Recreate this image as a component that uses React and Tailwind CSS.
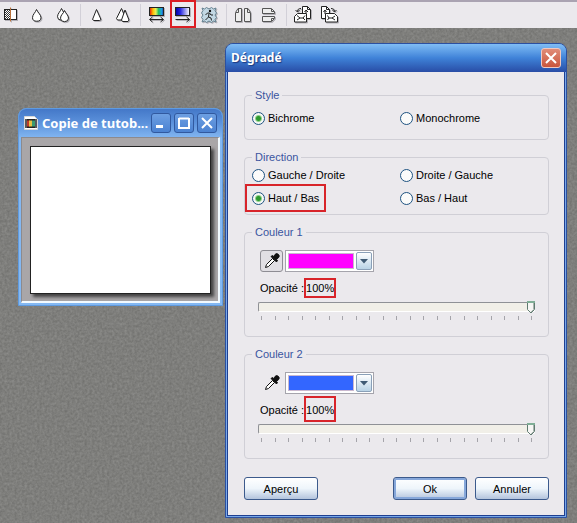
import { useState } from 'react';

const TICKS = Array.from({ length: 21 }, (_, i) => i);

/* ---------- toolbar icons (18x18, pixel aligned) ---------- */

const Icon = ({ children }) => (
    <svg
        width="18"
        height="18"
        viewBox="0 0 18 18"
        fill="#fff"
        stroke="#222"
        className="drop-shadow-[1px_1px_0_#b4b2b8]"
        aria-hidden="true"
    >
        {children}
    </svg>
);

const ContrastIcon = () => (
    <Icon>
        <defs>
            <pattern id="dither" width="2" height="2" patternUnits="userSpaceOnUse">
                <rect width="2" height="2" fill="#fff" stroke="none" />
                <path d="M0 0h1v1H0zM1 1h1v1H1z" fill="#333" stroke="none" />
            </pattern>
        </defs>
        <rect x="1.5" y="3.5" width="12" height="10" fill="#fff" />
        <rect x="2" y="4" width="5" height="9" fill="url(#dither)" stroke="none" />
        <path d="M7.5 1.5v14" stroke="#b8703a" />
    </Icon>
);

const DropIcon = () => (
    <Icon>
        <path d="M8.5 3.5c-1 3-4 5-4 8.200a4.200 3.500 0 0 0 8.500 0c0-3.200-3.500-5.200-4.500-8.200z" />
    </Icon>
);

const DropsIcon = () => (
    <Icon>
        <path d="M7.500 2.500c-1 3-4 5-4 8.200a4 3.500 0 0 0 8 0c0-3.200-3-5.200-4-8.200z" />
        <path d="M10.500 4.500c-1 3-4 4.500-4 7.700a4 3.500 0 0 0 8 0c0-3.200-3-4.700-4-7.700z" />
    </Icon>
);

const ConeIcon = () => (
    <Icon>
        <path d="M8.500 3.500l-4 10 1.500 1h5.500l1.500-1z" />
    </Icon>
);

const ConesIcon = () => (
    <Icon>
        <path d="M7.500 2.500l-5 10 1 1.500h6l2-2z" />
        <path d="M11 4l-3.500 10 1 1.500h5.500l1-1.500z" />
    </Icon>
);

const SpectrumIcon = () => (
    <Icon>
        <defs>
            <linearGradient id="spectrum">
                <stop offset="0" stopColor="#e01010" />
                <stop offset="0.250" stopColor="#ffc000" />
                <stop offset="0.450" stopColor="#e8f060" />
                <stop offset="0.650" stopColor="#20c060" />
                <stop offset="0.850" stopColor="#20a0e0" />
                <stop offset="1" stopColor="#2040b0" />
            </linearGradient>
        </defs>
        <rect x="1.500" y="1.500" width="14" height="8" fill="url(#spectrum)" />
        <path d="M2 13.500h13M4.500 11l-3 2.500 3 2.500M12.500 11l3 2.500-3 2.500" fill="none" />
    </Icon>
);

const GradientIcon = () => (
    <Icon>
        <defs>
            <linearGradient id="blues">
                <stop offset="0" stopColor="#0000a0" />
                <stop offset="0.350" stopColor="#2828e0" />
                <stop offset="1" stopColor="#fff" />
            </linearGradient>
        </defs>
        <rect x="1.500" y="1.500" width="14" height="8" fill="url(#blues)" />
        <path d="M1.500 13.500h14M12.500 11l3 2.500-3 2.500" fill="none" />
    </Icon>
);

const StampIcon = () => (
    <Icon>
        <path
            d="M2 2l2.500 1L6.500 1.500 9 3l2.500-1.500L13.500 3 16 2l-1 2.500L16.500 7 15 9l1.500 2.500-1.500 2 1 2.500-2.500-1-2 1.500L9 15l-2.500 1.500-2-1.500L2 16l1-2.500-1.500-2L3 9 1.500 7 3 4.500z"
            fill="#c3d8e4"
            stroke="#64808f"
        />
        <circle cx="10" cy="5" r="1.200" fill="#111" stroke="none" />
        <path d="M5.500 9l2-2h2l1.500 2h2M9 7.500L8.500 11l2.500 1 .5 2.500M8.500 11L5.500 14" fill="none" />
    </Icon>
);

const MirrorIcon = () => (
    <Icon>
        <path d="M1.500 15.500v-9l2.500-4h3.500v13zM10.500 15.500v-13H14l2.500 4v9z" fill="#eee" stroke="#555" />
        <path d="M4.500 3v3.500H2M13.500 3v3.500H16" fill="none" stroke="#555" />
    </Icon>
);

const FlipIcon = () => (
    <Icon>
        <path d="M2.500 7.500v-5h9l3 3v2zM2.500 10.500h12v2l-3 3h-9z" fill="#eee" stroke="#555" />
        <path d="M11.500 3v2.500H14M11.500 15v-2.500H14" fill="none" stroke="#555" />
    </Icon>
);

const RotateLeftIcon = () => (
    <Icon>
        <path d="M8.500 .5h5l3 3v9h-8z" />
        <path d="M13.500 .5v3h3M10.500 6l1.500-2 2 2M12 5v2" fill="none" />
        <path d="M.5 10.500l3-3h9v8.500H.5z" />
        <path d="M3 9.500l3 2.500-3 2M6 12h3M11 9.500L9 12l2 2" fill="none" />
        <path d="M3.500 5.500c0-2 1-3 3.500-3M1.500 4l2 2 2-2" fill="none" />
    </Icon>
);

const RotateRightIcon = () => (
    <Icon>
        <path d="M1.500 .5h5l3 3v9h-8z" />
        <path d="M6.500 .5v3h3M3.500 6L5 4l1.500 2M5 5v3" fill="none" />
        <path d="M5.500 7.500h9l3 3V16h-12z" />
        <path d="M15 10l-3 2 3 2M12 12H9M7.500 9.500L9 12l-1.500 2" fill="none" />
        <path d="M11 2.500c2.500 0 3.500 1 3.500 3M12.500 4l2 2 2-2" fill="none" />
    </Icon>
);

const TOOL_GROUPS = [
    [
        { name: 'Contraste', Glyph: ContrastIcon },
        { name: 'Adoucir', Glyph: DropIcon },
        { name: 'Adoucir plus', Glyph: DropsIcon }
    ],
    [
        { name: 'Renforcer', Glyph: ConeIcon },
        { name: 'Renforcer plus', Glyph: ConesIcon }
    ],
    [
        { name: 'Variation de teinte', Glyph: SpectrumIcon },
        { name: 'Dégradé', Glyph: GradientIcon, marked: true },
        { name: 'Filtre personnalisé', Glyph: StampIcon }
    ],
    [
        { name: 'Symétrie horizontale', Glyph: MirrorIcon },
        { name: 'Symétrie verticale', Glyph: FlipIcon }
    ],
    [
        { name: 'Rotation gauche', Glyph: RotateLeftIcon },
        { name: 'Rotation droite', Glyph: RotateRightIcon }
    ]
];

const Toolbar = () => (
    <div className="flex h-7 shrink-0 border-t-2 border-[#aaa3b2] bg-[#ebe9ed]">
        {TOOL_GROUPS.map((group, i) => (
            <div key={i} className="flex">
                {i > 0 && (
                    <span className="flex w-2 justify-center py-0.5">
                        <span className="w-px bg-[#d2d0d8]" />
                    </span>
                )}
                {group.map(({ name, Glyph, marked }, j) => (
                    <button
                        key={name}
                        type="button"
                        aria-label={name}
                        className={`relative flex items-center justify-center ${i === 0 && j === 0 ? 'w-6' : 'w-[26px]'}`}
                    >
                        <Glyph />
                        {marked && <span className="absolute inset-x-0 -top-0.5 bottom-0 border-2 border-[#dc1e24]" />}
                    </button>
                ))}
            </div>
        ))}
    </div>
);

/* ---------- desktop ---------- */

// Grain of the workspace background
const Grain = () => (
    <svg className="absolute inset-0 h-full w-full" aria-hidden="true">
        <filter id="grain" colorInterpolationFilters="sRGB">
            <feTurbulence type="fractalNoise" baseFrequency="0.4" numOctaves="2" seed="4" />
            <feColorMatrix values="0.14 0 0 0 0.425  0.14 0 0 0 0.425  0.14 0 0 0 0.415  0 0 0 0 1" />
        </filter>
        <rect width="100%" height="100%" filter="url(#grain)" />
    </svg>
);

const WindowButton = ({ label, children }) => (
    <button
        type="button"
        aria-label={label}
        className="flex h-5 w-5 items-center justify-center rounded-[3px] border border-[#31599f] bg-linear-to-b from-[#6d9fe2] to-[#4b82d2]"
    >
        <svg width="14" height="14" viewBox="0 0 14 14" fill="none" stroke="#fff" strokeWidth="2" aria-hidden="true">
            {children}
        </svg>
    </button>
);

const DocumentWindow = () => (
    <section className="absolute top-20 left-[18px] flex h-[198px] w-[205px] flex-col rounded-t-lg border border-[#5f9be0] bg-[#84b8f2] px-0.5 pb-0.5">
        <header className="-mx-0.5 flex h-7 shrink-0 items-center rounded-t-[7px] bg-linear-to-b from-[#4478c8] via-[#5c92dc] to-[#80b4f0] px-[5px]">
            <svg width="14" height="14" viewBox="0 0 14 14" aria-hidden="true">
                <path d="M.5.500h10l3 3v10H.5z" fill="#fff" stroke="#d8d8d8" />
                <path d="M1 3h12v9H1z" fill="#222" />
                <path d="M3 4.500h3v6H3z" fill="#c03a2a" />
                <path d="M5 4.500h3v6H5z" fill="#e8c040" />
                <path d="M8 4.500h3v6H8z" fill="#3a9a70" />
                <path d="M2 3.500v9M12 3.500v9" stroke="#fff" strokeDasharray="1 1" />
            </svg>
            <h2 className="ml-1 flex-1 font-['Noto_Sans',sans-serif] text-[13px] leading-5 font-bold whitespace-nowrap text-white">
                Copie de tutob...
            </h2>
            <div className="flex gap-[3px]">
                <WindowButton label="Réduire"><path d="M2 10.500h7" strokeWidth="3" /></WindowButton>
                <WindowButton label="Agrandir"><path d="M2 2.500h10M2 2v10h10V2" /></WindowButton>
                <WindowButton label="Fermer"><path d="M2 2l10 10M12 2L2 12" /></WindowButton>
            </div>
        </header>
        <div className="flex flex-1 border-t border-l border-r-2 border-b-2 border-t-[#8c8a8e] border-r-[#f2faff] border-b-[#f2faff] border-l-[#8c8a8e] bg-[#a9a6a8] pt-2 pr-[7px] pb-[7px] pl-2">
            <div className="flex-1 border border-[#222] bg-white shadow-[3px_3px_3px_#444]" />
        </div>
    </section>
);

/* ---------- dialog ---------- */

const Group = ({ title, className, children }) => (
    <fieldset className="rounded-[4px] border border-[#d0cfd6]">
        <legend className="ml-[7px] px-[3px] leading-[14px] text-[#3a559f]">{title}</legend>
        <div className={className}>{children}</div>
    </fieldset>
);

const Radio = ({ name, label, checked, onChange, marked }) => (
    <label className="relative flex h-4 items-center gap-[3px] justify-self-start">
        <input
            type="radio"
            name={name}
            checked={checked}
            onChange={onChange}
            className="h-[13px] w-[13px] appearance-none rounded-full border border-[#1d5281] bg-[#fbfbfa] checked:bg-[radial-gradient(circle,#2e9a30_0_2px,#8fd08c_3px,#f6f8f6_4px)]"
        />
        {label}
        {marked && <span className="absolute -inset-x-[7px] -inset-y-[6px] border-2 border-[#d8242a]" />}
    </label>
);

const RadioGrid = ({ name, options, value, onChange, marked }) => (
    <div className="grid grid-cols-2 gap-y-[7px]">
        {options.map(option => (
            <Radio
                key={option}
                name={name}
                label={option}
                checked={value === option}
                onChange={() => onChange(option)}
                marked={marked === option}
            />
        ))}
    </div>
);

const Eyedropper = () => (
    <svg width="16" height="16" viewBox="0 0 16 16" aria-hidden="true">
        <path d="M1.500 14.500l1-3 6-6 2 2-6 6z" fill="#fff" stroke="#111" />
        <path d="M7 3.500l1.500-1 1 1 1.500-2a2.300 2.300 0 0 1 3.500 3.200L12.500 6.500l1 1L12.500 9z" fill="#111" stroke="#111" />
    </svg>
);

const OpacitySlider = ({ id, value, onChange }) => (
    <div className="relative -ml-0.5 w-[277px]">
        <input
            id={id}
            type="range"
            min="0"
            max="100"
            value={value}
            onChange={e => onChange(Number(e.target.value))}
            className="block h-[10px] w-full appearance-none rounded-[2px] border border-t-[#8f9196] border-r-[#fff] border-b-[#fff] border-l-[#8f9196] bg-[#f1efe8] [&::-webkit-slider-thumb]:h-2 [&::-webkit-slider-thumb]:w-2 [&::-webkit-slider-thumb]:appearance-none"
        />
        <span className="pointer-events-none absolute -top-px right-1 left-0">
            <svg
                className="absolute -translate-x-1/2"
                style={{ left: `${value}%` }}
                width="8"
                height="13"
                viewBox="0 0 8 13"
                aria-hidden="true"
            >
                <path d="M.5 1.500h7v7L4 12 .5 8.500z" fill="#f6f6f4" stroke="#5f7a70" />
                <path d="M6.500 2v6.500L4 11" fill="none" stroke="#a9b4ae" />
                <path d="M0 1h8" stroke="#7fae96" strokeWidth="2" />
            </svg>
        </span>
        <div className="mt-1 mr-[3px] ml-[3px] flex justify-between">
            {TICKS.map(tick => (
                <span key={tick} className="h-1 w-px bg-[#a5a4aa]" />
            ))}
        </div>
    </div>
);

const ColorGroup = ({ id, title, picking, swatch, colorName }) => {
    const [opacity, setOpacity] = useState(100);

    return (
        <Group title={title} className="pt-[11px] pb-4 pl-[15px]">
            <div className="flex gap-0.5">
                <button
                    type="button"
                    aria-label="Pipette"
                    className={`flex h-[22px] w-[23px] items-center justify-center rounded-[3px] border ${
                        picking ? 'border-[#8e8d94] bg-[#e1dfe4]' : 'border-transparent'
                    }`}
                >
                    <Eyedropper />
                </button>
                <div className="flex h-[22px] w-[89px] gap-0.5 border border-[#a5a4ac] bg-white py-px pr-px pl-0.5">
                    <select
                        aria-label={title}
                        className={`my-px min-w-0 flex-1 appearance-none border border-[#c9b8cf] text-transparent ${swatch}`}
                    >
                        <option className="text-black">{colorName}</option>
                    </select>
                    <span className="pointer-events-none flex w-4 items-center justify-center rounded-[2px] border border-[#8aa0b8] bg-linear-to-b from-white to-[#b9d3e6]">
                        <svg width="8" height="5" viewBox="0 0 8 5" fill="#3f5a74" aria-hidden="true">
                            <path d="M0 0h8L4 4.500z" />
                        </svg>
                    </span>
                </div>
            </div>
            <div className="mt-2 mb-[6px] flex h-4 items-center gap-0.5">
                <label htmlFor={id}>Opacité :</label>
                <output htmlFor={id} className="relative">
                    {opacity}%
                    <span className={`absolute -inset-x-0.5 border-2 border-[#d8242a] ${picking ? '-inset-y-0.5' : '-top-[6px] -bottom-1'}`} />
                </output>
            </div>
            <OpacitySlider id={id} value={opacity} onChange={setOpacity} />
        </Group>
    );
};

const DialogButton = ({ isDefault, children }) => (
    <button
        type="button"
        className={`h-[23px] w-[74px] rounded-[3px] border border-[#3c5a8c] bg-linear-to-b from-white via-[#eef5fb] to-[#b4c4dd] ${
            isDefault ? 'shadow-[inset_0_0_0_2px_#86a7da]' : ''
        }`}
    >
        {children}
    </button>
);

const GradientDialog = () => {
    const [style, setStyle] = useState('Bichrome');
    const [direction, setDirection] = useState('Haut / Bas');

    return (
        <section
            role="dialog"
            aria-label="Dégradé"
            className="absolute top-[15px] left-[225px] w-[342px] rounded-t-lg border border-[#2c50a0] bg-[#78a8e8] px-px pb-px"
        >
            <header className="-mx-px flex h-7 items-center justify-between rounded-t-[7px] bg-linear-to-b from-[#80bdf5] via-[#3f82d8] to-[#294da6] px-[5px]">
                <h1 className="font-['Noto_Sans',sans-serif] text-[12px] leading-5 font-bold text-white [text-shadow:1px_1px_1px_#1c3a80]">
                    Dégradé
                </h1>
                <button
                    type="button"
                    aria-label="Fermer"
                    className="flex h-5 w-5 items-center justify-center rounded-[3px] border border-[#f0c8c0] bg-linear-to-b from-[#e08c78] to-[#c9553c]"
                >
                    <svg width="12" height="12" viewBox="0 0 12 12" stroke="#fff" strokeWidth="2" aria-hidden="true">
                        <path d="M1 1l10 10M11 1L1 11" />
                    </svg>
                </button>
            </header>
            <form
                onSubmit={e => e.preventDefault()}
                className="flex flex-col gap-[10px] border border-t-0 border-[#1f3f90] bg-[#ebe9ed] pt-4 pr-[15px] pb-[15px] pl-4"
            >
                <Group title="Style" className="pt-2 pb-[13px] pl-[7px]">
                    <RadioGrid name="style" options={['Bichrome', 'Monochrome']} value={style} onChange={setStyle} />
                </Group>
                <Group title="Direction" className="pt-[3px] pb-2 pl-[7px]">
                    <RadioGrid
                        name="direction"
                        options={['Gauche / Droite', 'Droite / Gauche', 'Haut / Bas', 'Bas / Haut']}
                        value={direction}
                        onChange={setDirection}
                        marked="Haut / Bas"
                    />
                </Group>
                <ColorGroup id="opacity-1" title="Couleur 1" colorName="Magenta" swatch="bg-[#ff00ff]" picking />
                <ColorGroup id="opacity-2" title="Couleur 2" colorName="Bleu" swatch="bg-[#3366ff]" />
                <div className="mt-2 flex gap-2">
                    <DialogButton>Aperçu</DialogButton>
                    <span className="flex-1" />
                    <DialogButton isDefault>Ok</DialogButton>
                    <DialogButton>Annuler</DialogButton>
                </div>
            </form>
        </section>
    );
};

export default function App() {
    return (
        <div className="flex min-h-screen flex-col font-['Liberation_Sans',Arial,sans-serif] text-[11px] leading-4 text-black">
            <Toolbar />
            <main className="relative flex-1 overflow-hidden bg-[#7d7d7b]">
                <Grain />
                <DocumentWindow />
                <GradientDialog />
            </main>
        </div>
    );
}
